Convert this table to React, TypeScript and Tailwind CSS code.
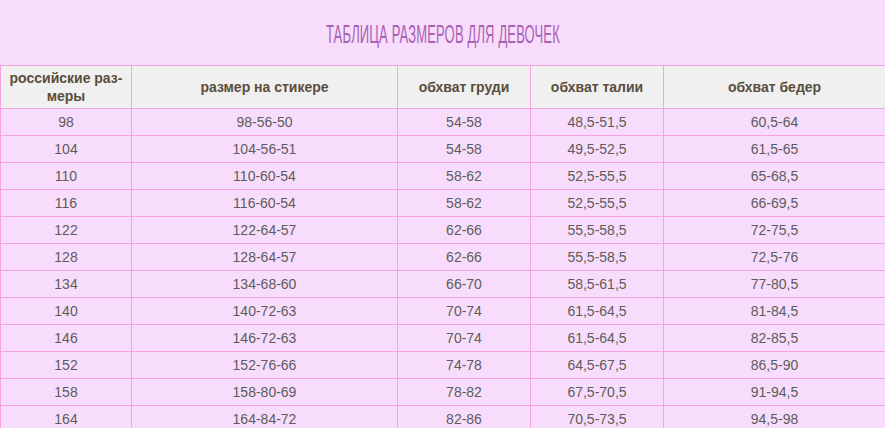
const rows = [
  ["98", "98-56-50", "54-58", "48,5-51,5", "60,5-64"],
  ["104", "104-56-51", "54-58", "49,5-52,5", "61,5-65"],
  ["110", "110-60-54", "58-62", "52,5-55,5", "65-68,5"],
  ["116", "116-60-54", "58-62", "52,5-55,5", "66-69,5"],
  ["122", "122-64-57", "62-66", "55,5-58,5", "72-75,5"],
  ["128", "128-64-57", "62-66", "55,5-58,5", "72,5-76"],
  ["134", "134-68-60", "66-70", "58,5-61,5", "77-80,5"],
  ["140", "140-72-63", "70-74", "61,5-64,5", "81-84,5"],
  ["146", "146-72-63", "70-74", "61,5-64,5", "82-85,5"],
  ["152", "152-76-66", "74-78", "64,5-67,5", "86,5-90"],
  ["158", "158-80-69", "78-82", "67,5-70,5", "91-94,5"],
  ["164", "164-84-72", "82-86", "70,5-73,5", "94,5-98"],
];

const widths = ["w-[131px]", "w-[266px]", "w-[133px]", "w-[133px]", "w-[222px]"];

export default function App() {
  return (
    <div className="w-[885px] h-[428px] overflow-hidden bg-[#f8dcfb] font-['Liberation_Sans',Arial,sans-serif]">
      <div className="h-[65px] flex items-center justify-center pt-[2px]">
        <h2 className="text-[26px] leading-none text-[#a862b4] tracking-[0.3px] scale-x-[0.5] whitespace-nowrap font-normal">
          ТАБЛИЦА РАЗМЕРОВ ДЛЯ ДЕВОЧЕК
        </h2>
      </div>
      <table className="w-[885px] table-fixed border-collapse text-[14px] text-center">
        <colgroup>
          {widths.map((w, i) => (
            <col key={i} className={w} />
          ))}
        </colgroup>
        <thead>
          <tr className="h-[43px] bg-[#f0f0f0] text-[#5a4d3c] font-bold">
            <th className="border border-[#f5a3e3] leading-[18px] px-1">
              российские раз-
              <br />
              меры
            </th>
            <th className="border border-[#f5a3e3]">размер на стикере</th>
            <th className="border border-[#f5a3e3]">обхват груди</th>
            <th className="border border-[#f5a3e3]">обхват талии</th>
            <th className="border border-[#f5a3e3]">обхват бедер</th>
          </tr>
        </thead>
        <tbody className="text-[#5c5c5c]">
          {rows.map((r) => (
            <tr key={r[0]} className="h-[27px]">
              {r.map((c, i) => (
                <td key={i} className="border border-[#f5a3e3] p-0">
                  {c}
                </td>
              ))}
            </tr>
          ))}
        </tbody>
      </table>
    </div>
  );
}
